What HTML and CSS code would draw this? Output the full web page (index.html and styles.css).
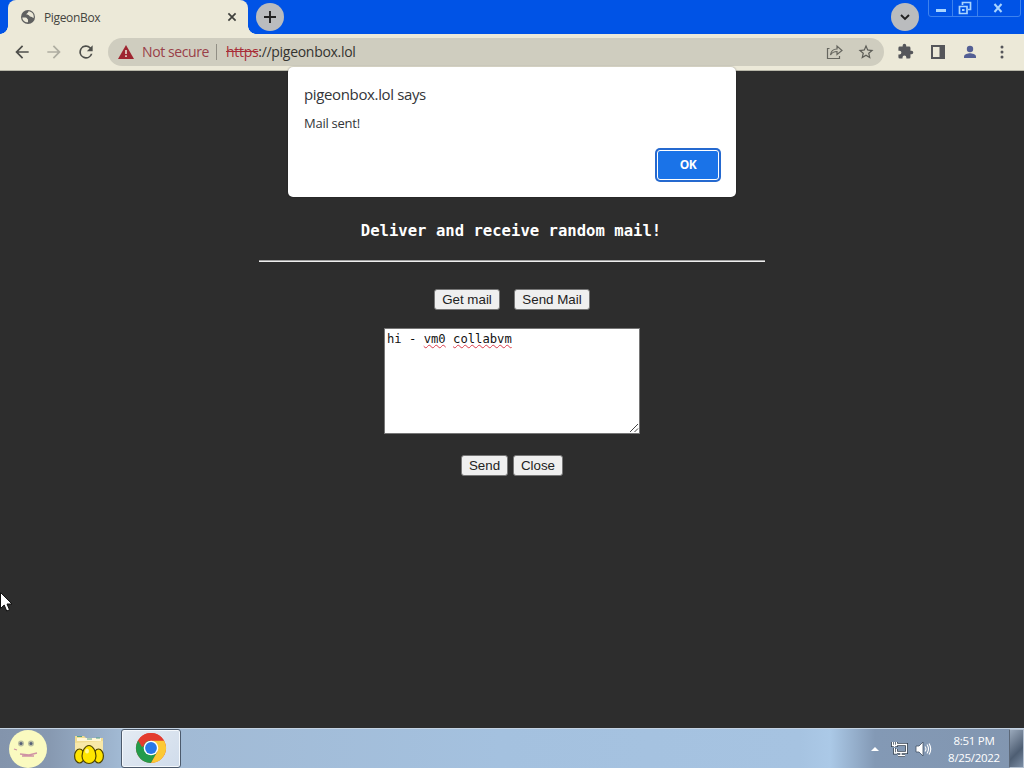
FILE: index.html
```html
<!DOCTYPE html>
<html lang="en">
<head>
    <meta charset="UTF-8">
    <meta name="viewport" content="width=device-width, initial-scale=1.0">
    <title>PigeonBox</title>
    <link rel="stylesheet" href="styles.css">
</head>
<body>
    <header class="tab-strip">
        <div class="tab">
            <svg class="tab-icon" viewBox="0 0 16 16"><circle cx="8" cy="8" r="7" fill="#5f6060"/><path d="M2.300 8.500h3.200c1.500 0 1.500 1.500 2.500 2v2.800C5 13.500 2.500 11.500 2.300 8.500zM8.500 2.300c0 1.700-2 1.700-2 3.200 1 1 2.500 0 3 1.500.4 1.300 2.500.3 3 1.500l1.200.5C14.300 5.500 12 2.500 8.500 2.300z" fill="#ece9d8"/></svg>
            <span class="tab-title">PigeonBox</span>
            <svg class="tab-close" viewBox="0 0 10 10"><path d="M1.400 1.400l7.200 7.200M8.600 1.400L1.400 8.600" stroke="#3f403c" stroke-width="1.700"/></svg>
        </div>
        <div class="round-btn">
            <svg width="14" height="14" viewBox="0 0 14 14"><path d="M7 1v12M1 7h12" stroke="#222" stroke-width="1.900"/></svg>
        </div>
        <div class="round-btn tab-search">
            <svg width="14" height="14" viewBox="0 0 14 14"><path d="M3 5l4 4 4-4" fill="none" stroke="#222" stroke-width="1.900"/></svg>
        </div>
        <div class="window-controls">
            <div class="control"><svg width="12" height="12" viewBox="0 0 12 12"><path d="M1 7h10v3H1z" fill="#a8d4ff"/></svg></div>
            <div class="control"><svg width="14" height="14" viewBox="0 0 14 14"><path d="M4.500 4V1.500h8v7H10M1.500 5.500h7.500v7H1.500z" fill="none" stroke="#a8d4ff" stroke-width="1.700"/><path d="M4 8h2.500v2H4z" fill="#a8d4ff"/></svg></div>
            <div class="control close"><svg width="10" height="10" viewBox="0 0 10 10"><path d="M1.500 1l7 8M8.500 1l-7 8" stroke="#a8d4ff" stroke-width="2"/></svg></div>
        </div>
    </header>

    <nav class="toolbar">
        <svg class="nav-icon" viewBox="0 0 24 24"><path d="M20 11H7.830l5.590-5.590L12 4l-8 8 8 8 1.410-1.410L7.830 13H20z"/></svg>
        <svg class="nav-icon disabled" viewBox="0 0 24 24"><path d="M4 11h12.170l-5.590-5.590L12 4l8 8-8 8-1.410-1.410L16.170 13H4z"/></svg>
        <svg class="nav-icon" viewBox="0 0 24 24"><path d="M17.650 6.350A8 8 0 1 0 19.730 14h-2.080A6 6 0 1 1 12 6c1.660 0 3.140.690 4.220 1.780L13 11h7V4z"/></svg>
        <div class="address-bar">
            <svg class="warning" viewBox="0 0 16 14"><path d="M8 0l8 14H0z" fill="#9e2530"/><path d="M7.200 5h1.600v4H7.200zM7.200 10.300h1.600V12H7.200z" fill="#e6ded0"/></svg>
            <span class="not-secure">Not secure</span>
            <span class="divider"></span>
            <span class="url"><s>https</s>://pigeonbox.lol</span>
            <svg class="share" viewBox="0 0 18 16"><path d="M3.500 4.500h-2v10h12V12M4.500 11c.5-4 3-6 6.500-6V2l5 4.500-5 4v-3c-3 0-5 1-6.500 3.500z" fill="none" stroke="#66665f" stroke-width="1.200"/></svg>
            <svg class="star" viewBox="0 0 24 24"><path d="M22 9.240l-7.190-.62L12 2 9.190 8.630 2 9.240l5.460 4.730L5.820 21 12 17.270 18.180 21l-1.630-7.030zM12 15.400l-3.760 2.270 1-4.280-3.320-2.880 4.380-.38L12 6.100l1.710 4.040 4.380.38-3.320 2.880 1 4.280z"/></svg>
        </div>
        <div class="actions">
            <svg viewBox="0 0 24 24" width="17" height="17"><path d="M20.500 11H19V7a2 2 0 0 0-2-2h-4V3.500a2.500 2.500 0 0 0-5 0V5H4a2 2 0 0 0-2 2v3.800h1.500a2.700 2.700 0 0 1 0 5.400H2V20a2 2 0 0 0 2 2h3.800v-1.500a2.700 2.700 0 0 1 5.400 0V22H17a2 2 0 0 0 2-2v-4h1.500a2.500 2.500 0 0 0 0-5z"/></svg>
            <svg viewBox="0 0 16 16" width="16" height="16"><path d="M1 1h14v14H1zM3 3v10h6.500V3z" fill-rule="evenodd"/></svg>
            <svg class="profile" viewBox="0 0 16 16" width="16" height="16"><circle cx="8" cy="5" r="3.200"/><path d="M2 14v-1.500C2 10 6 9.200 8 9.200s6 .8 6 3.300V14z"/></svg>
            <svg viewBox="0 0 16 16" width="16" height="16"><circle cx="8" cy="3" r="1.500"/><circle cx="8" cy="8" r="1.500"/><circle cx="8" cy="13" r="1.500"/></svg>
        </div>
    </nav>

    <main class="page">
        <h3>Deliver and receive random mail!</h3>
        <hr>
        <div class="menu">
            <button>Get mail</button>
            <button>Send Mail</button>
        </div>
        <div class="message-box">hi - <span class="typo">vm0</span> <span class="typo">collabvm</span>
            <svg class="grip" viewBox="0 0 10 10"><path d="M1 9l8-8M5.500 9L9 5.500" stroke="#444" stroke-width="1"/></svg>
        </div>
        <div class="submit">
            <button>Send</button>
            <button>Close</button>
        </div>
    </main>

    <div class="alert">
        <div class="alert-title">pigeonbox.lol says</div>
        <div class="alert-text">Mail sent!</div>
        <button class="ok">OK</button>
    </div>

    <footer class="taskbar">
        <svg class="start" viewBox="0 0 40 40"><circle cx="20" cy="20" r="19" fill="#fafac0"/><circle cx="13" cy="14.500" r="3" fill="#b9bda0"/><circle cx="23" cy="14.500" r="3" fill="#b9bda0"/><circle cx="13" cy="14.500" r="1.500" fill="#566078"/><circle cx="23" cy="14.500" r="1.500" fill="#566078"/><path d="M6 20l3 1M12 25l9 1 8-2M14 27h12" fill="none" stroke="#cf93a4" stroke-width="1.300"/></svg>
        <svg class="folder" viewBox="0 0 30 32"><path d="M1 3h9l2 2h17v20H1z" fill="#f0dc91"/><path d="M3 5h24v3H3z" fill="#fff7d5"/><path d="M3 3.500h5M13 6h5M22 5h4" stroke="#55a08c" stroke-width="1"/><path d="M1 10l28-2v17H1z" fill="#f8e8a8"/><g fill="#ffe500" stroke="#4d4300" stroke-width="1.200"><ellipse cx="5.500" cy="23" rx="4.900" ry="7"/><ellipse cx="24.500" cy="23" rx="4.900" ry="7"/><path d="M15 12.500c4 0 7 6 7 10.500a7 7.500 0 0 1-14 0c0-4.500 3-10.500 7-10.500z"/></g><ellipse cx="13" cy="18" rx="2" ry="2.500" fill="#fff79a"/></svg>
        <div class="task">
            <svg viewBox="0 0 32 32" width="32" height="32"><circle cx="16" cy="16" r="15" fill="#e33b2e"/><path d="M3 8.500A15 15 0 0 0 16 31l6.500-11.500L16 16z" fill="#239b4b"/><path d="M29 8.500A15 15 0 0 1 16 31l6.500-11.500L16 8.500z" fill="#fcc934"/><path d="M3 8.500L9.500 19.500 16 16l-1-7.500z" fill="#239b4b"/><path d="M3 8.500A15 15 0 0 1 29 8.500H16a7.500 7.500 0 0 0-7.200 5.500L7 15z" fill="#e33b2e"/><circle cx="16" cy="16" r="7.300" fill="#fff"/><circle cx="16" cy="16" r="5.900" fill="#2878e8"/></svg>
        </div>
        <div class="tray">
            <svg width="8" height="5" viewBox="0 0 8 5"><path d="M0 5l4-4 4 4z" fill="#fff"/></svg>
            <svg class="network" width="17" height="16" viewBox="0 0 17 16"><path d="M6 3.500h9.500v8H5.500V8M10 12v2.500M7 14.500h7M3.500 7v5H6M1.500 1v3.500h4V1M3.500 1v5" fill="none" stroke="#334150" stroke-width="3"/><path d="M6 3.500h9.500v8H5.500V8M10 12v2.500M7 14.500h7M3.500 7v5H6M1.500 1v3.500h4V1M3.500 1v5" fill="none" stroke="#fff" stroke-width="1.300"/></svg>
            <svg class="volume" width="17" height="16" viewBox="0 0 17 16"><path d="M1 5h3l4-4v14l-4-4H1z" fill="#fff" stroke="#415064" stroke-width=".8"/><path d="M10 5.500q2 2.500 0 5M12 3.500q3 4.500 0 9M14 2.500q3.500 5.500 0 11" fill="none" stroke="#fff" stroke-width="1.100"/></svg>
            <div class="clock"><span class="time">8:51 PM</span><span>8/25/2022</span></div>
            <div class="show-desktop"></div>
        </div>
    </footer>

    <svg class="cursor" viewBox="0 0 12 20"><path d="M.5.500v16l3.700-3.500 2.500 6 2.800-1.200L7 12h5z" fill="#fff" stroke="#111" stroke-width="1"/></svg>
</body>
</html>
```
FILE: styles.css
```css
* {
    box-sizing: border-box;
}

body {
    margin: 0;
    height: 100vh;
    display: flex;
    flex-direction: column;
    overflow: hidden;
    position: relative;
    font-family: "Open Sans", "Noto Sans", sans-serif;
    background-color: #2d2d2d;
}

svg {
    display: block;
    flex-shrink: 0;
}

/* Tab strip */
.tab-strip {
    height: 34px;
    flex-shrink: 0;
    display: flex;
    background-color: #0053e6;
    padding-left: 8px;
}

.tab {
    position: relative;
    width: 240px;
    height: 34px;
    display: flex;
    align-items: center;
    padding: 0 11px 0 12px;
    background-color: #ece9d8;
    border-radius: 8px 8px 0 0;
}

/* Curved feet of the active tab */
.tab::before,
.tab::after {
    content: "";
    position: absolute;
    bottom: 0;
    width: 8px;
    height: 8px;
}

.tab::before {
    left: -8px;
    background: radial-gradient(circle at 0 0, transparent 7.5px, #ece9d8 8px);
}

.tab::after {
    right: -8px;
    background: radial-gradient(circle at 100% 0, transparent 7.5px, #ece9d8 8px);
}

.tab-icon {
    width: 16px;
    height: 16px;
}

.tab-title {
    margin-left: 8px;
    font-size: 12px;
    letter-spacing: -0.35px;
    color: #45453f;
}

.tab-close {
    width: 10px;
    height: 10px;
    margin-left: auto;
}

.round-btn {
    width: 28px;
    height: 28px;
    margin: 3px 0 0 8px;
    border-radius: 50%;
    background-color: #babcbe;
    display: flex;
    align-items: center;
    justify-content: center;
}

.tab-search {
    margin-left: auto;
}

.window-controls {
    display: flex;
    width: 93px;
    height: 18px;
    margin: -1px 3px 0 9px;
    border: 1px solid #3d82ee;
    border-radius: 0 0 3px 3px;
}

.control {
    width: 25px;
    display: flex;
    align-items: center;
    justify-content: center;
    border-right: 1px solid #3d82ee;
}

.control:first-child {
    width: 24px;
}

.control.close {
    flex: 1;
    padding-right: 2px;
    border-right: none;
}

/* Toolbar */
.toolbar {
    height: 37px;
    flex-shrink: 0;
    display: flex;
    align-items: center;
    padding: 0 14px 1px 12px;
    background-color: #ece9d8;
    border-bottom: 1px solid #b8b7a9;
}

.nav-icon {
    width: 20px;
    height: 20px;
    margin-right: 12px;
    fill: #4e4f4b;
}

.nav-icon.disabled {
    fill: #aeada1;
}

.address-bar {
    width: 776px;
    height: 28px;
    display: flex;
    align-items: center;
    padding: 0 10px;
    border-radius: 14px;
    background-color: #cfcdbf;
    font-size: 14px;
}

.warning {
    width: 16px;
    height: 14px;
}

.not-secure {
    margin-left: 8px;
    color: #994048;
    width: 68px;
    letter-spacing: -0.4px;
    white-space: nowrap;
}

.divider {
    width: 1px;
    height: 16px;
    margin: 0 9px 0 6px;
    background-color: #918f85;
}

.url {
    color: #33332f;
    letter-spacing: -0.3px;
}

.url s {
    color: #a82e38;
}

.share {
    width: 18px;
    height: 16px;
    margin-left: auto;
}

.star {
    width: 18px;
    height: 18px;
    margin: 0 -1px 0 13px;
    fill: #5c5c56;
}

.actions {
    flex: 1;
    display: flex;
    align-items: center;
    justify-content: space-between;
    margin-left: 13px;
    fill: #55565a;
}

.profile {
    fill: #535f94;
}

/* Page */
.page {
    flex: 1;
    width: 506px;
    margin: 0 auto;
    display: flex;
    flex-direction: column;
    align-items: center;
}

.page h3 {
    margin: 149px 0 0;
    padding-right: 2px;
    height: 22px;
    line-height: 22px;
    font-family: "DejaVu Sans Mono", monospace;
    font-size: 15.6px;
    color: #fff;
    white-space: nowrap;
}

.page hr {
    width: 100%;
    height: 2px;
    margin: 18px 0 27px;
    border: none;
    border-top: 1px solid #a0a0a0;
    background-color: #eee;
}

.page button {
    height: 21px;
    padding: 0;
    font-family: "Liberation Sans", Arial, sans-serif;
    font-size: 13.333px;
    color: #222;
    background-color: #efefef;
    border: 1px solid #767676;
    border-radius: 3px;
}

.menu,
.submit {
    display: flex;
}

.menu {
    gap: 14px;
}

.menu button {
    width: 66px;
}

.menu button + button {
    width: 76px;
}

.message-box {
    position: relative;
    width: 256px;
    height: 106px;
    margin: 18px 0 21px;
    padding: 3px 2px;
    border: 1px solid #767676;
    background-color: #fff;
    font-family: "DejaVu Sans Mono", monospace;
    font-size: 12.2px;
    line-height: 15px;
    color: #111;
}

.typo {
    text-decoration: underline wavy #db3c4b 1px;
    text-decoration-skip-ink: none;
    text-underline-offset: 1px;
}

.grip {
    position: absolute;
    right: 0;
    bottom: 0;
    width: 10px;
    height: 10px;
}

.submit {
    gap: 5px;
}

.submit button {
    width: 47px;
}

.submit button + button {
    width: 50px;
}

/* Alert dialog, hangs over toolbar and page */
.alert {
    position: absolute;
    top: 67px;
    left: 50%;
    width: 448px;
    height: 130px;
    margin-left: -224px;
    padding: 16px 16px;
    display: flex;
    flex-direction: column;
    background-color: #fff;
    border-radius: 5px;
    box-shadow: 0 0 2px rgba(0, 0, 0, 0.4);
    color: #333538;
}

.alert-title {
    font-size: 15px;
    line-height: 22px;
    letter-spacing: -0.36px;
}

.alert-text {
    margin-top: 9px;
    font-size: 13px;
    line-height: 19px;
    letter-spacing: -0.25px;
}

.ok {
    align-self: flex-end;
    width: 62px;
    height: 30px;
    margin: 17px 1px 0 0;
    padding: 0 0 1px;
    border: 1px solid #fff;
    border-radius: 3px;
    box-shadow: 0 0 0 2px #2569cf;
    background-color: #1a73e8;
    color: #fff;
    font-family: inherit;
    font-size: 12px;
    font-weight: 700;
    letter-spacing: -0.4px;
}

/* Taskbar */
.taskbar {
    height: 40px;
    flex-shrink: 0;
    display: flex;
    align-items: center;
    border-top: 1px solid #c4d3e3;
    background: linear-gradient(90deg, #8394ac 0, #8799b1 50px, #a1b9d3 120px, #a4c1df 500px, #a6c3e1 800px, #abc9e7 830px, #8399b5 875px, #8296b0 100%);
}

.start {
    width: 40px;
    height: 40px;
    margin-left: 8px;
}

.folder {
    width: 30px;
    height: 32px;
    margin-left: 26px;
}

.task {
    width: 60px;
    height: 39px;
    margin-left: 17px;
    display: flex;
    align-items: center;
    justify-content: center;
    border: 1px solid #4c5a6c;
    border-radius: 3px;
    background: linear-gradient(135deg, #e4ebf3, #d0dceb);
    box-shadow: inset 0 0 0 1px #f4f8fc;
}

.task svg {
    margin-top: -2px;
}

.tray {
    height: 100%;
    margin-left: auto;
    display: flex;
    align-items: center;
}

.network {
    margin-left: 12px;
}

.volume {
    margin-left: 7px;
}

.clock {
    width: 64px;
    margin-left: 10px;
    display: flex;
    flex-direction: column;
    align-items: center;
    font-size: 11.5px;
    line-height: 17px;
    letter-spacing: -0.3px;
    color: #fff;
}

.show-desktop {
    width: 15px;
    height: 100%;
    margin-left: 3px;
    border: 1px solid #b3c0d0;
    border-left-color: #5c6878;
    background: linear-gradient(135deg, #9aa9bb, #4e5e73 60%, #7b8da4);
}

.cursor {
    position: absolute;
    left: 0;
    top: 592px;
    width: 12px;
    height: 20px;
}
```
